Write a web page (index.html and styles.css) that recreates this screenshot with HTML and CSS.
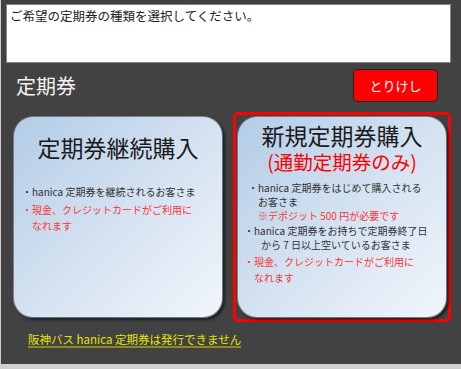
FILE: index.html
```html
<!DOCTYPE html>
<html lang="ja">
<head>
    <meta charset="UTF-8">
    <meta name="viewport" content="width=device-width, initial-scale=1.0">
    <title>定期券</title>
    <link rel="stylesheet" href="styles.css">
</head>
<body>
    <div class="screen">
        <div class="message">ご希望の定期券の種類を選択してください。</div>

        <div class="header">
            <h1 class="title">定期券</h1>
            <button class="cancel">とりけし</button>
        </div>

        <div class="choices">
            <div class="choice-frame">
                <div class="choice choice-renew">
                    <h2 class="choice-title">定期券継続購入</h2>
                    <ul class="notes">
                        <li>・hanica 定期券を継続されるお客さま</li>
                        <li class="warn">・現金、クレジットカードがご利用に<br>なれます</li>
                    </ul>
                </div>
            </div>

            <div class="choice-frame selected">
                <div class="choice choice-new">
                    <h2 class="choice-title">新規定期券購入</h2>
                    <div class="choice-sub">(通勤定期券のみ)</div>
                    <ul class="notes">
                        <li class="first">・hanica 定期券をはじめて購入される<br>お客さま<br><span class="warn">※デポジット 500 円が必要です</span></li>
                        <li class="second">・hanica 定期券をお持ちで定期券終了日<br><span class="more">から 7 日以上空いているお客さま</span></li>
                        <li class="warn third">・現金、クレジットカードがご利用に<br>なれます</li>
                    </ul>
                </div>
            </div>
        </div>

        <div class="footer">
            <span class="notice">阪神バス hanica 定期券は発行できません</span>
        </div>
    </div>
</body>
</html>
```

FILE: styles.css
```css
body {
    margin: 0;
    background-color: #cfcfcf;
    font-family: "Noto Sans CJK JP", "Noto Sans", sans-serif;
}

.screen {
    width: 460px;
    height: 364px;
    margin-left: 1px;
    padding: 4px 10px 0 5px;
    box-sizing: border-box;
    background-color: #424242;
}

.message {
    height: 59px;
    box-sizing: border-box;
    background-color: white;
    border: 1px solid #888;
    padding: 2px 3px;
    font-size: 12.5px;
    line-height: 18px;
    color: #222;
}

.header {
    display: flex;
    align-items: center;
    justify-content: space-between;
    margin-top: 6px;
    padding: 0 13px 0 10px;
}

.title {
    margin: 0;
    font-size: 20px;
    font-weight: normal;
    color: #f2f2f2;
}

.cancel {
    width: 85px;
    height: 33px;
    background-color: #ff0000;
    color: white;
    border: 1px solid #222;
    border-radius: 5px;
    font-family: inherit;
    font-size: 13px;
    padding: 0;
}

.choices {
    display: flex;
    gap: 6px;
    margin-top: 10px;
    padding-left: 3px;
}

.choice-frame {
    border: 3px solid transparent;
    border-radius: 5px;
    padding: 1px;
}

.choice-frame.selected {
    border-color: #ff0000;
}

.choice {
    width: 210px;
    height: 202px;
    box-sizing: border-box;
    border: 1px solid rgba(0,0,0,0.45);
    border-radius: 20px;
    background: linear-gradient(135deg, #b3cce7 0%, #d4e2f1 50%, #f1f5fb 100%);
    box-shadow: 2px 2px 3px rgba(0,0,0,0.55);
}

.choice-title {
    margin: 0;
    text-align: center;
    font-size: 23px;
    font-weight: normal;
    color: #1a1a1a;
}

.choice-sub {
    text-align: center;
    font-size: 19.5px;
    line-height: 25px;
    color: #ff0000;
}

.notes {
    list-style: none;
    margin: 0;
    padding: 0;
    font-size: 10px;
    color: #333;
}

.notes li {
    padding-left: 1em;
    text-indent: -1em;
}

.warn {
    color: #ff3333;
}

.choice-renew {
    padding: 16px 8px 0;
}

.choice-renew .choice-title {
    line-height: 28px;
}

.choice-renew .notes {
    margin-top: 23px;
    line-height: 16px;
}

.choice-renew .notes li + li {
    margin-top: 2px;
}

.choice-new {
    padding: 5px 6px 0;
}

.choice-new .choice-title {
    line-height: 27px;
}

.choice-new .notes {
    margin-top: 7px;
    line-height: 14px;
}

.choice-new .first {
    margin-left: 4px;
}

.choice-new .second {
    margin-top: 1px;
}

.choice-new .more {
    padding-left: 7px;
}

.choice-new .third {
    margin-top: 2px;
    line-height: 16px;
}

.footer {
    display: flex;
    margin-top: 10px;
    padding-left: 22px;
}

.notice {
    font-size: 11.5px;
    line-height: 14px;
    color: #e4e400;
    border-bottom: 2px solid #8c8a20;
}
```
